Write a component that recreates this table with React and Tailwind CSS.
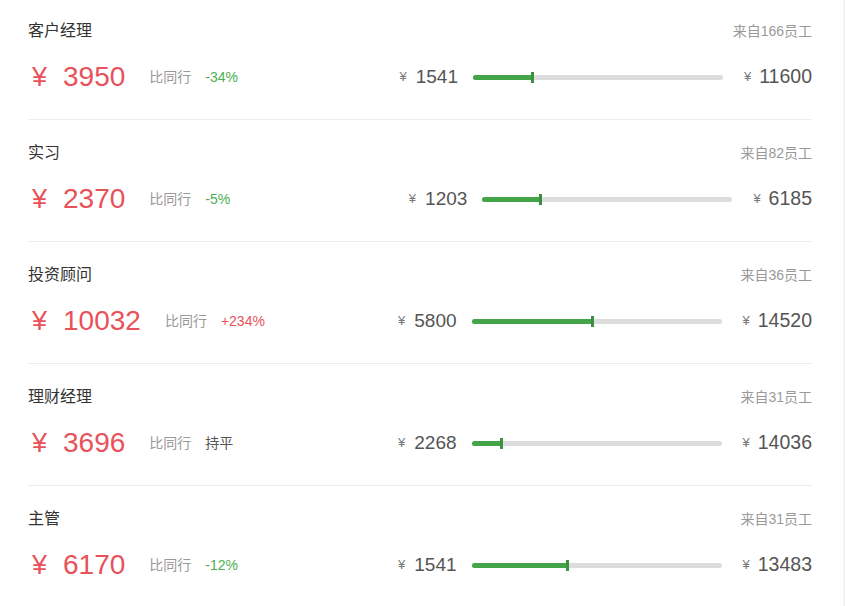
const rows = [
  { title: "客户经理", count: 166, value: 3950, diff: "-34%", tone: "down", min: 1541, max: 11600 },
  { title: "实习", count: 82, value: 2370, diff: "-5%", tone: "down", min: 1203, max: 6185 },
  { title: "投资顾问", count: 36, value: 10032, diff: "+234%", tone: "up", min: 5800, max: 14520 },
  { title: "理财经理", count: 31, value: 3696, diff: "持平", tone: "flat", min: 2268, max: 14036 },
  { title: "主管", count: 31, value: 6170, diff: "-12%", tone: "down", min: 1541, max: 13483 },
];

const toneClass = {
  down: "text-[#4caf50]",
  up: "text-[#e8525a]",
  flat: "text-[#555]",
};

const SalaryRow = ({ row, last }) => {
  const pct = ((row.value - row.min) / (row.max - row.min)) * 100;
  return (
    <div className={`pt-[23px] pb-[22px] ${last ? "" : "border-b border-[#ececec]"}`}>
      <div className="flex items-center justify-between h-[20px]">
        <span className="text-[16px] text-[#333]">{row.title}</span>
        <span className="text-[14px] text-[#999]">来自{row.count}员工</span>
      </div>
      <div className="mt-[16px] h-[40px] flex items-center justify-between">
        <div className="flex items-center">
          <span className="text-[#e8525a] text-[27px] ml-[4px]">¥</span>
          <span className="text-[#e8525a] text-[28px] ml-[16px]">{row.value}</span>
          <span className="text-[14px] text-[#999] ml-[24px]">比同行</span>
          <span className={`ml-[14px] text-[14px] ${toneClass[row.tone]}`}>{row.diff}</span>
        </div>
        <div className="flex items-center">
          <span className="text-[13px] text-[#777]">¥</span>
          <span className="text-[19px] text-[#555] ml-[9px]">{row.min}</span>
          <div className="relative w-[250px] h-[5px] rounded-full bg-[#dddddd] ml-[15px] mr-[21px]">
            <div className="absolute left-0 top-0 h-[5px] rounded-l-full bg-[#43a547]" style={{ width: `${pct}%` }} />
            <div className="absolute top-[-3px] w-[3px] h-[11px] bg-[#3b9140]" style={{ left: `calc(${pct}% - 2px)` }} />
          </div>
          <span className="text-[13px] text-[#777]">¥</span>
          <span className="text-[19.5px] text-[#555] ml-[8px]">{row.max}</span>
        </div>
      </div>
    </div>
  );
};

const App = () => {
  return (
    <div
      className="w-[845px] h-[606px] overflow-hidden bg-white border-r-2 border-[#f2f2f2]"
      style={{ fontFamily: '"Liberation Sans", Arial, "Noto Sans CJK SC", sans-serif' }}
    >
      <div className="pl-[28px] pr-[31px] mt-[-2px]">
        {rows.map((row, i) => (
          <SalaryRow key={row.title} row={row} last={i === rows.length - 1} />
        ))}
      </div>
    </div>
  );
};

export default App;
